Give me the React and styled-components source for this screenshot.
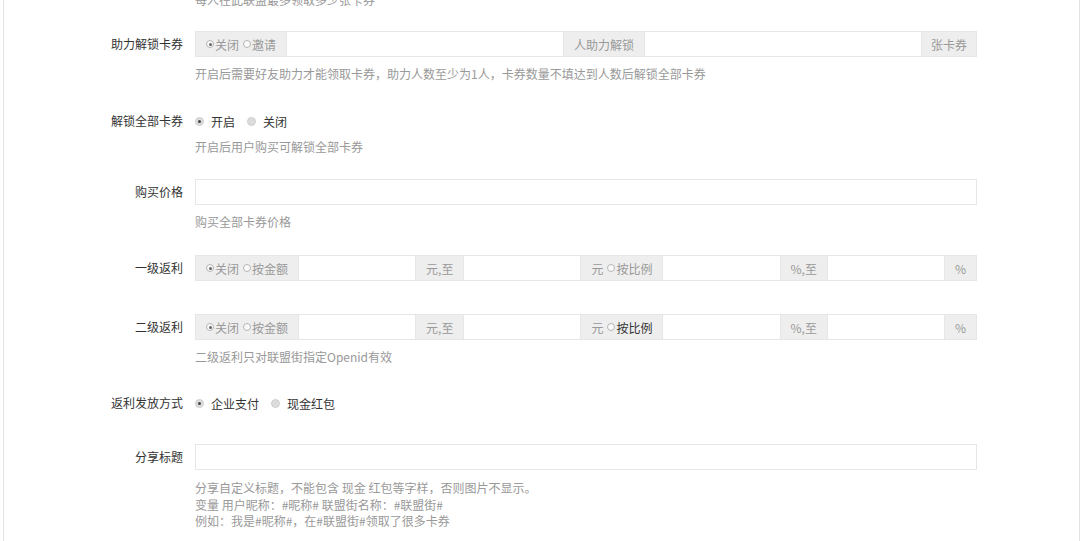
import React from 'react';
import styled, { createGlobalStyle } from 'styled-components';

const GlobalStyle = createGlobalStyle`
  html, body {
    margin: 0;
    padding: 0;
    background: #fff;
    overflow: hidden;
  }
  body {
    font-family: "Noto Sans CJK SC", "Liberation Sans", sans-serif;
    font-size: 12px;
    color: #333;
  }
`;

const Panel = styled.div`
  margin: 0 3px;
  min-height: 100vh;
  border-left: 1px solid #e3e3e3;
  border-right: 1px solid #e3e3e3;
  box-sizing: border-box;
`;

const FormGroup = styled.div`
  display: flex;
  align-items: flex-start;
  margin-top: ${(p) => p.$mt || 0}px;
`;

const Label = styled.div`
  width: 179px;
  flex: none;
  text-align: right;
  padding-right: 12px;
  line-height: ${(p) => p.$h || 26}px;
  color: #333;
  white-space: nowrap;
`;

const Controls = styled.div`
  width: 782px;
  flex: none;
`;

const Spacer = styled.div`
  width: 191px;
  flex: none;
`;

const Help = styled.div`
  color: #999;
  line-height: ${(p) => p.$lh || 17}px;
  margin-top: ${(p) => p.$mt ?? 8}px;
  white-space: nowrap;
`;

const InputGroup = styled.div`
  display: flex;
  height: 26px;
`;

const Addon = styled.div`
  flex: none;
  display: flex;
  align-items: center;
  padding: 0 ${(p) => p.$pad ?? 10}px;
  background: #eeeeee;
  border: 1px solid #e6e6e6;
  color: #999;
  box-sizing: border-box;
  white-space: nowrap;
  & + * { margin-left: -1px; }
`;

const Field = styled.div`
  flex: 1 1 0;
  min-width: 0;
  height: 26px;
  border: 1px solid #e6e6e6;
  background: #fff;
  box-sizing: border-box;
  & + * { margin-left: -1px; }
`;

const TextInput = styled.div`
  height: 26px;
  border: 1px solid #e6e6e6;
  box-sizing: border-box;
  background: #fff;
`;

const SmallRadio = styled.span`
  display: inline-block;
  width: 8px;
  height: 8px;
  border-radius: 50%;
  border: 1px solid #b5b5b5;
  box-sizing: border-box;
  margin-right: 1px;
  position: relative;
  background: #fafafa;
  &::after {
    content: '';
    display: ${(p) => (p.$checked ? 'block' : 'none')};
    position: absolute;
    left: 1.5px;
    top: 1.5px;
    width: 3px;
    height: 3px;
    border-radius: 50%;
    background: #666;
  }
`;

const AddonText = styled.span`
  color: ${(p) => (p.$dark ? '#333' : '#999')};
  margin-right: ${(p) => p.$mr || 0}px;
`;

const RadioRow = styled.div`
  display: flex;
  align-items: center;
  height: 24px;
`;

const RadioItem = styled.label`
  display: flex;
  align-items: center;
  margin-right: 12px;
  color: #333;
`;

const BigRadio = styled.span`
  display: inline-block;
  width: 9px;
  height: 9px;
  border-radius: 50%;
  background: #dcdcdc;
  border: 1px solid #cfcfcf;
  box-sizing: border-box;
  margin-right: 7px;
  position: relative;
  &::after {
    content: '';
    display: ${(p) => (p.$checked ? 'block' : 'none')};
    position: absolute;
    left: 2px;
    top: 2px;
    width: 3px;
    height: 3px;
    border-radius: 50%;
    background: #444;
  }
`;

const Row = styled.div`
  display: flex;
`;

function RebateGroup({ darkRatio }) {
  return (
    <InputGroup>
      <Addon>
        <SmallRadio $checked />
        <AddonText $mr={4}>关闭</AddonText>
        <SmallRadio />
        <AddonText>按金额</AddonText>
      </Addon>
      <Field />
      <Addon>元,至</Addon>
      <Field />
      <Addon>
        <AddonText $mr={4}>元</AddonText>
        <SmallRadio />
        <AddonText $dark={darkRatio}>按比例</AddonText>
      </Addon>
      <Field />
      <Addon>%,至</Addon>
      <Field />
      <Addon>%</Addon>
    </InputGroup>
  );
}

export default function App() {
  return (
    <>
      <GlobalStyle />
      <Panel>
        <Row>
          <Spacer />
          <Help $mt={-9}>每人在此联盟最多领取多少张卡券</Help>
        </Row>

        <FormGroup $mt={23}>
          <Label>助力解锁卡券</Label>
          <Controls>
            <InputGroup>
              <Addon>
                <SmallRadio $checked />
                <AddonText $mr={4}>关闭</AddonText>
                <SmallRadio />
                <AddonText>邀请</AddonText>
              </Addon>
              <Field />
              <Addon>人助力解锁</Addon>
              <Field />
              <Addon $pad={9}>张卡券</Addon>
            </InputGroup>
            <Help>开启后需要好友助力才能领取卡券，助力人数至少为1人，卡券数量不填达到人数后解锁全部卡券</Help>
          </Controls>
        </FormGroup>

        <FormGroup $mt={27}>
          <Label $h={24}>解锁全部卡券</Label>
          <Controls>
            <RadioRow>
              <RadioItem>
                <BigRadio $checked />开启
              </RadioItem>
              <RadioItem>
                <BigRadio />关闭
              </RadioItem>
            </RadioRow>
            <Help $mt={5}>开启后用户购买可解锁全部卡券</Help>
          </Controls>
        </FormGroup>

        <FormGroup $mt={24}>
          <Label>购买价格</Label>
          <Controls>
            <TextInput />
            <Help>购买全部卡券价格</Help>
          </Controls>
        </FormGroup>

        <FormGroup $mt={25}>
          <Label>一级返利</Label>
          <Controls>
            <RebateGroup />
          </Controls>
        </FormGroup>

        <FormGroup $mt={33}>
          <Label>二级返利</Label>
          <Controls>
            <RebateGroup darkRatio />
            <Help>二级返利只对联盟街指定Openid有效</Help>
          </Controls>
        </FormGroup>

        <FormGroup $mt={26}>
          <Label $h={24}>返利发放方式</Label>
          <Controls>
            <RadioRow>
              <RadioItem>
                <BigRadio $checked />企业支付
              </RadioItem>
              <RadioItem>
                <BigRadio />现金红包
              </RadioItem>
            </RadioRow>
          </Controls>
        </FormGroup>

        <FormGroup $mt={29}>
          <Label>分享标题</Label>
          <Controls>
            <TextInput />
            <Help $mt={10} $lh={16.5}>
              分享自定义标题，不能包含 现金 红包等字样，否则图片不显示。
              <br />
              变量 用户昵称：#昵称# 联盟街名称：#联盟街#
              <br />
              例如：我是#昵称#，在#联盟街#领取了很多卡券
            </Help>
          </Controls>
        </FormGroup>
      </Panel>
    </>
  );
}
